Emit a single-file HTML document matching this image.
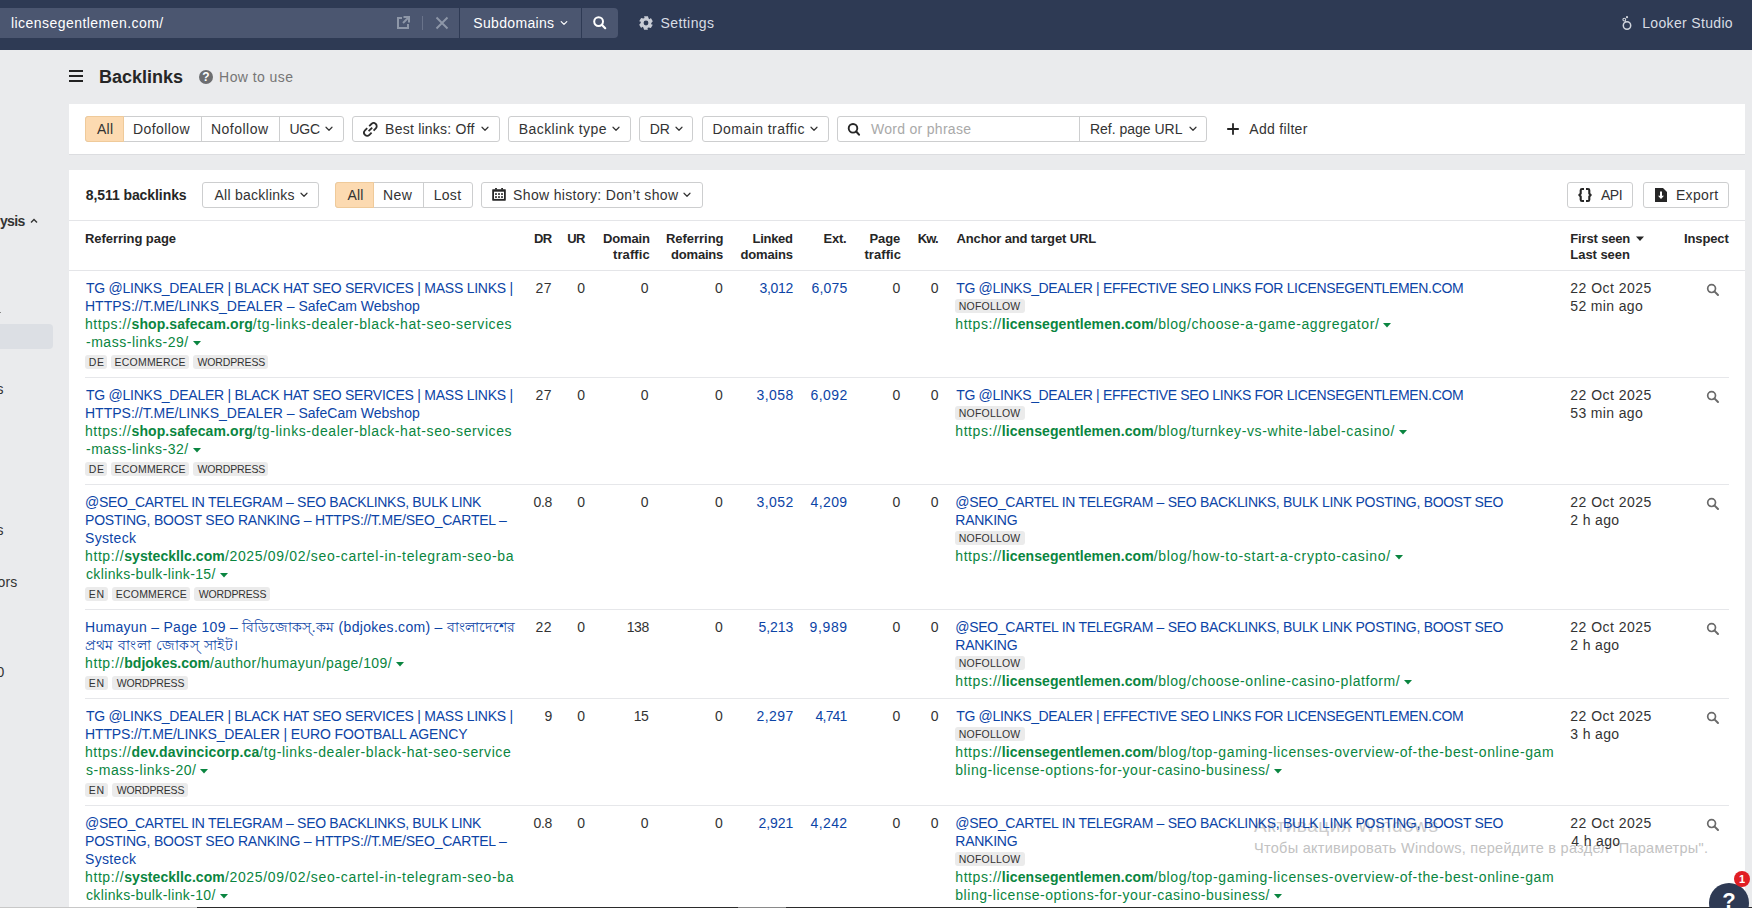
<!DOCTYPE html>
<html><head><meta charset="utf-8"><title>Backlinks</title>
<style>
html,body{margin:0;padding:0;}
body{width:1752px;height:908px;overflow:hidden;position:relative;background:#eaebed;font-family:"Liberation Sans", sans-serif;}
</style></head><body>
<div style="position:absolute;left:0px;top:0px;width:1752px;height:50px;background:#2e3a54;"></div><div style="position:absolute;left:0px;top:8px;width:459px;height:30px;background:#4b5670;"></div><div style="position:absolute;left:460px;top:8px;width:121px;height:30px;background:#4b5670;"></div><div style="position:absolute;left:582px;top:8px;width:36px;height:30px;background:#4b5670;border-radius:0 4px 4px 0"></div><div style="position:absolute;left:11.00px;top:14px;font-size:14px;line-height:18px;font-weight:400;color:#ffffff;letter-spacing:0.45px;white-space:nowrap;">licensegentlemen.com/</div><svg style="position:absolute;left:396px;top:15px;" width="16" height="16" viewBox="0 0 16 16"><path d="M6 3 H2 V13 H12 V9" fill="none" stroke="#8e97a8" stroke-width="2"/><path d="M7 8 L13 2" stroke="#8e97a8" stroke-width="2"/><path d="M7.5 2 H13 V7.5" fill="none" stroke="#8e97a8" stroke-width="2"/></svg><div style="position:absolute;left:422px;top:16px;width:1px;height:14px;background:#69738a;"></div><svg style="position:absolute;left:435px;top:16px;" width="14" height="14" viewBox="0 0 14 14"><path d="M1.5 1.5 L12.5 12.5 M12.5 1.5 L1.5 12.5" stroke="#8e97a8" stroke-width="1.9"/></svg><div style="position:absolute;left:473.25px;top:14px;font-size:14px;line-height:18px;font-weight:400;color:#ffffff;letter-spacing:0.333px;white-space:nowrap;">Subdomains</div><svg style="position:absolute;left:560px;top:19px;" width="8" height="8" viewBox="0 0 8 8"><path d="M1.2 2.6 L4 5.4 L6.8 2.6" fill="none" stroke="#ffffff" stroke-width="1.2" stroke-linecap="round" stroke-linejoin="round"/></svg><svg style="position:absolute;left:591.9px;top:15.2px;" width="16" height="16" viewBox="0 0 16 16"><circle cx="6.6" cy="6.6" r="4.4" fill="none" stroke="#ffffff" stroke-width="2"/><path d="M9.8 9.8 L13.2 13.2" stroke="#ffffff" stroke-width="2.2" stroke-linecap="round"/></svg><svg style="position:absolute;left:639px;top:16px;" width="14" height="14" viewBox="0 0 14 14"><path d="M5.07 0.27 L8.93 0.27 L9.65 2.41 L10.68 3.19 L11.86 1.96 L13.79 5.31 L12.30 7.00 L12.14 8.28 L13.79 8.69 L11.86 12.04 L9.65 11.59 L8.46 12.09 L8.93 13.73 L5.07 13.73 L4.35 11.59 L3.32 10.81 L2.14 12.04 L0.21 8.69 L1.70 7.00 L1.86 5.72 L0.21 5.31 L2.14 1.96 L4.35 2.41 L5.54 1.91 Z" fill="#c8ccd5"/><circle cx="7" cy="7" r="2.4" fill="#2e3a54"/></svg><div style="position:absolute;left:660.50px;top:14px;font-size:14px;line-height:18px;font-weight:400;color:#d9dde4;letter-spacing:0.429px;white-space:nowrap;">Settings</div><svg style="position:absolute;left:1620px;top:14px;" width="14" height="18" viewBox="0 0 14 18"><circle cx="7" cy="11.5" r="3.7" fill="none" stroke="#d0d4dc" stroke-width="1.5"/><circle cx="4.3" cy="5.6" r="1.4" fill="none" stroke="#d0d4dc" stroke-width="1.1"/><circle cx="7" cy="3.2" r="1.1" fill="#d0d4dc"/><path d="M5 7 L5.8 8.2" stroke="#d0d4dc" stroke-width="1"/></svg><div style="position:absolute;left:1642.25px;top:14px;font-size:14px;line-height:18px;font-weight:400;color:#d9dde4;letter-spacing:0.333px;white-space:nowrap;">Looker Studio</div><div style="position:absolute;left:0.00px;top:212px;font-size:14px;line-height:18px;font-weight:700;color:#333333;letter-spacing:-0.667px;white-space:nowrap;">ysis</div><svg style="position:absolute;left:29px;top:216px;" width="10" height="10" viewBox="0 0 10 10"><path d="M2 6.4 L5 3.4 L8 6.4" fill="none" stroke="#333" stroke-width="1.4"/></svg><div style="position:absolute;left:0px;top:312px;width:1px;height:1px;background:#888;"></div><div style="position:absolute;left:0px;top:324px;width:53px;height:25px;background:#dcdfe4;border-radius:0 4px 4px 0"></div><div style="position:absolute;left:-3.50px;top:380px;font-size:14px;line-height:18px;font-weight:400;color:#333333;letter-spacing:-2.24px;white-space:nowrap;">s</div><div style="position:absolute;left:-3.50px;top:521px;font-size:14px;line-height:18px;font-weight:400;color:#333333;letter-spacing:-2.24px;white-space:nowrap;">s</div><div style="position:absolute;left:-2.50px;top:573px;font-size:14px;line-height:18px;font-weight:400;color:#333333;letter-spacing:0.1px;white-space:nowrap;">ors</div><div style="position:absolute;left:-3.50px;top:663px;font-size:14px;line-height:18px;font-weight:400;color:#333333;letter-spacing:-2.28px;white-space:nowrap;">0</div><div style="position:absolute;left:69px;top:70px;width:14px;height:2px;background:#222;"></div><div style="position:absolute;left:69px;top:75px;width:14px;height:2px;background:#222;"></div><div style="position:absolute;left:69px;top:80px;width:14px;height:2px;background:#222;"></div><div style="position:absolute;left:98.90px;top:66px;font-size:18px;line-height:22px;font-weight:700;color:#262626;letter-spacing:0.0px;white-space:nowrap;">Backlinks</div><svg style="position:absolute;left:199px;top:70px;" width="14" height="14" viewBox="0 0 14 14"><circle cx="7" cy="7" r="7" fill="#6d6e71"/><text x="7" y="11" text-anchor="middle" font-family="Liberation Sans" font-weight="700" font-size="12" fill="#fff">?</text></svg><div style="position:absolute;left:219.10px;top:68px;font-size:14px;line-height:18px;font-weight:400;color:#767676;letter-spacing:0.422px;white-space:nowrap;">How to use</div><div style="position:absolute;left:69px;top:104px;width:1676px;height:50px;background:#fff;box-shadow:0 1px 0 #dcdde0"></div><div style="position:absolute;left:85px;top:116px;width:259px;height:26px;box-sizing:border-box;background:#fff;border:1px solid #cdcecf;border-radius:3px;"></div><div style="position:absolute;left:85px;top:116px;width:39px;height:26px;box-sizing:border-box;background:#fcdab1;border:1px solid #efca9a;border-radius:3px 0 0 3px;"></div><div style="position:absolute;left:201px;top:117px;width:1px;height:24px;background:#cdcecf;"></div><div style="position:absolute;left:279px;top:117px;width:1px;height:24px;background:#cdcecf;"></div><div style="position:absolute;left:97.10px;top:120px;font-size:14px;line-height:18px;font-weight:400;color:#333333;letter-spacing:0.18px;white-space:nowrap;">All</div><div style="position:absolute;left:133.00px;top:120px;font-size:14px;line-height:18px;font-weight:400;color:#333333;letter-spacing:0.429px;white-space:nowrap;">Dofollow</div><div style="position:absolute;left:211.00px;top:120px;font-size:14px;line-height:18px;font-weight:400;color:#333333;letter-spacing:0.486px;white-space:nowrap;">Nofollow</div><div style="position:absolute;left:289.40px;top:120px;font-size:14px;line-height:18px;font-weight:400;color:#333333;letter-spacing:-0.2px;white-space:nowrap;">UGC</div><svg style="position:absolute;left:325px;top:126px;" width="8" height="6" viewBox="0 0 8 6"><path d="M1 1.25 L4 4.25 L7 1.25" fill="none" stroke="#333333" stroke-width="1.2" stroke-linecap="round" stroke-linejoin="round"/></svg><div style="position:absolute;left:352px;top:116px;width:148px;height:26px;box-sizing:border-box;background:#fff;border:1px solid #cdcecf;border-radius:3px;"></div><svg style="position:absolute;left:362.7px;top:121.6px;" width="16" height="16" viewBox="0 0 16 16"><g fill="none" stroke="#2b2b2b" stroke-width="1.8" stroke-linecap="butt"><path d="M6.2 4.2 L8.4 2.0 A3.1 3.1 0 0 1 12.8 6.4 L10.6 8.6"/><path d="M8.6 10.6 L6.4 12.8 A3.1 3.1 0 0 1 2.0 8.4 L4.2 6.2"/><path d="M5.6 9.2 L9.2 5.6"/></g></svg><div style="position:absolute;left:385.10px;top:120px;font-size:14px;line-height:18px;font-weight:400;color:#333333;letter-spacing:0.228px;white-space:nowrap;">Best links: Off</div><svg style="position:absolute;left:481px;top:126px;" width="8" height="6" viewBox="0 0 8 6"><path d="M1 1.25 L4 4.25 L7 1.25" fill="none" stroke="#333333" stroke-width="1.2" stroke-linecap="round" stroke-linejoin="round"/></svg><div style="position:absolute;left:508px;top:116px;width:123px;height:26px;box-sizing:border-box;background:#fff;border:1px solid #cdcecf;border-radius:3px;"></div><div style="position:absolute;left:518.70px;top:120px;font-size:14px;line-height:18px;font-weight:400;color:#333333;letter-spacing:0.45px;white-space:nowrap;">Backlink type</div><svg style="position:absolute;left:612px;top:126px;" width="8" height="6" viewBox="0 0 8 6"><path d="M1 1.25 L4 4.25 L7 1.25" fill="none" stroke="#333333" stroke-width="1.2" stroke-linecap="round" stroke-linejoin="round"/></svg><div style="position:absolute;left:639px;top:116px;width:54px;height:26px;box-sizing:border-box;background:#fff;border:1px solid #cdcecf;border-radius:3px;"></div><div style="position:absolute;left:649.70px;top:120px;font-size:14px;line-height:18px;font-weight:400;color:#333333;letter-spacing:0.0px;white-space:nowrap;">DR</div><svg style="position:absolute;left:675px;top:126px;" width="8" height="6" viewBox="0 0 8 6"><path d="M1 1.25 L4 4.25 L7 1.25" fill="none" stroke="#333333" stroke-width="1.2" stroke-linecap="round" stroke-linejoin="round"/></svg><div style="position:absolute;left:702px;top:116px;width:127px;height:26px;box-sizing:border-box;background:#fff;border:1px solid #cdcecf;border-radius:3px;"></div><div style="position:absolute;left:712.50px;top:120px;font-size:14px;line-height:18px;font-weight:400;color:#333333;letter-spacing:0.446px;white-space:nowrap;">Domain traffic</div><svg style="position:absolute;left:809.5px;top:126px;" width="8" height="6" viewBox="0 0 8 6"><path d="M1 1.25 L4 4.25 L7 1.25" fill="none" stroke="#333333" stroke-width="1.2" stroke-linecap="round" stroke-linejoin="round"/></svg><div style="position:absolute;left:837px;top:116px;width:370px;height:26px;box-sizing:border-box;background:#fff;border:1px solid #cdcecf;border-radius:3px;"></div><div style="position:absolute;left:1079px;top:117px;width:1px;height:24px;background:#cdcecf;"></div><svg style="position:absolute;left:846.2px;top:121.8px;" width="16" height="16" viewBox="0 0 16 16"><circle cx="7" cy="6.3" r="4.3" fill="none" stroke="#262626" stroke-width="1.9"/><path d="M10.2 9.5 L13 12.6" stroke="#262626" stroke-width="2.1" stroke-linecap="round"/></svg><div style="position:absolute;left:870.90px;top:120px;font-size:14px;line-height:18px;font-weight:400;color:#a9a9a9;letter-spacing:0.302px;white-space:nowrap;">Word or phrase</div><div style="position:absolute;left:1089.90px;top:120px;font-size:14px;line-height:18px;font-weight:400;color:#333333;letter-spacing:0.0px;white-space:nowrap;">Ref. page URL</div><svg style="position:absolute;left:1188.5px;top:126px;" width="8" height="6" viewBox="0 0 8 6"><path d="M1 1.25 L4 4.25 L7 1.25" fill="none" stroke="#333333" stroke-width="1.2" stroke-linecap="round" stroke-linejoin="round"/></svg><svg style="position:absolute;left:1226px;top:122px;" width="14" height="14" viewBox="0 0 14 14"><path d="M7 1.2 V12.8 M1.2 7 H12.8" stroke="#222" stroke-width="1.8"/></svg><div style="position:absolute;left:1249.30px;top:120px;font-size:14px;line-height:18px;font-weight:400;color:#333333;letter-spacing:0.311px;white-space:nowrap;">Add filter</div><div style="position:absolute;left:69px;top:170px;width:1676px;height:738px;background:#fff;"></div><div style="position:absolute;left:1254.10px;top:814px;font-size:19px;line-height:24px;font-weight:400;color:#cdcdcd;letter-spacing:0.55px;white-space:nowrap;">Активация Windows</div><div style="position:absolute;left:1254.10px;top:839px;font-size:14.5px;line-height:18px;font-weight:400;color:#c2c2c2;letter-spacing:0.272px;white-space:nowrap;">Чтобы активировать Windows, перейдите в раздел "Параметры".</div><div style="position:absolute;left:85.70px;top:186px;font-size:14px;line-height:18px;font-weight:700;color:#262626;letter-spacing:-0.071px;white-space:nowrap;">8,511 backlinks</div><div style="position:absolute;left:202px;top:182px;width:117px;height:26px;box-sizing:border-box;background:#fff;border:1px solid #cdcecf;border-radius:3px;"></div><div style="position:absolute;left:214.50px;top:186px;font-size:14px;line-height:18px;font-weight:400;color:#333333;letter-spacing:0.25px;white-space:nowrap;">All backlinks</div><svg style="position:absolute;left:300px;top:192px;" width="8" height="6" viewBox="0 0 8 6"><path d="M1 1.25 L4 4.25 L7 1.25" fill="none" stroke="#333333" stroke-width="1.2" stroke-linecap="round" stroke-linejoin="round"/></svg><div style="position:absolute;left:335px;top:182px;width:138px;height:26px;box-sizing:border-box;background:#fff;border:1px solid #cdcecf;border-radius:3px;"></div><div style="position:absolute;left:335px;top:182px;width:39px;height:26px;box-sizing:border-box;background:#fcdab1;border:1px solid #efca9a;border-radius:3px 0 0 3px;"></div><div style="position:absolute;left:423px;top:183px;width:1px;height:24px;background:#cdcecf;"></div><div style="position:absolute;left:347.40px;top:186px;font-size:14px;line-height:18px;font-weight:400;color:#333333;letter-spacing:0.18px;white-space:nowrap;">All</div><div style="position:absolute;left:383.00px;top:186px;font-size:14px;line-height:18px;font-weight:400;color:#333333;letter-spacing:0.42px;white-space:nowrap;">New</div><div style="position:absolute;left:433.70px;top:186px;font-size:14px;line-height:18px;font-weight:400;color:#333333;letter-spacing:0.306px;white-space:nowrap;">Lost</div><div style="position:absolute;left:481px;top:182px;width:222px;height:26px;box-sizing:border-box;background:#fff;border:1px solid #cdcecf;border-radius:3px;"></div><svg style="position:absolute;left:491px;top:187px;" width="16" height="15" viewBox="0 0 16 15"><rect x="1.2" y="2.2" width="13.6" height="11.5" rx="0.6" fill="#262626"/><rect x="3" y="4.7" width="10" height="7.2" fill="#fff"/><g fill="#262626"><rect x="4.1" y="1" width="1.8" height="1.6"/><rect x="10.2" y="1" width="1.8" height="1.6"/><rect x="4.1" y="6.2" width="1.8" height="1.7"/><rect x="7.1" y="6.2" width="1.8" height="1.7"/><rect x="10.1" y="6.2" width="1.8" height="1.7"/><rect x="4.1" y="9.2" width="1.8" height="1.7"/><rect x="7.1" y="9.2" width="1.8" height="1.7"/><rect x="10.1" y="9.2" width="1.8" height="1.7"/></g></svg><div style="position:absolute;left:513.10px;top:186px;font-size:14px;line-height:18px;font-weight:400;color:#333333;letter-spacing:0.339px;white-space:nowrap;">Show history: Don’t show</div><svg style="position:absolute;left:683px;top:192px;" width="8" height="6" viewBox="0 0 8 6"><path d="M1 1.25 L4 4.25 L7 1.25" fill="none" stroke="#333333" stroke-width="1.2" stroke-linecap="round" stroke-linejoin="round"/></svg><div style="position:absolute;left:1567px;top:182px;width:66px;height:26px;box-sizing:border-box;background:#fff;border:1px solid #cdcecf;border-radius:3px;"></div><svg style="position:absolute;left:1577px;top:187px;" width="16" height="16" viewBox="0 0 16 16"><g fill="none" stroke="#262626" stroke-width="2.1" stroke-linejoin="round"><path d="M7 2 H5 Q3.7 2 3.7 3.3 V6.5 L2.3 8 L3.7 9.5 V12.7 Q3.7 14 5 14 H7"/><path d="M9 2 H11 Q12.3 2 12.3 3.3 V6.5 L13.7 8 L12.3 9.5 V12.7 Q12.3 14 11 14 H9"/></g></svg><div style="position:absolute;left:1601.00px;top:186px;font-size:14px;line-height:18px;font-weight:400;color:#333333;letter-spacing:-0.5px;white-space:nowrap;">API</div><div style="position:absolute;left:1643px;top:182px;width:86px;height:26px;box-sizing:border-box;background:#fff;border:1px solid #cdcecf;border-radius:3px;"></div><svg style="position:absolute;left:1655px;top:188px;" width="12" height="14" viewBox="0 0 12 14"><path d="M0 0 H8 L12 4 V14 H0 Z" fill="#262626"/><path d="M6 3.5 V8.5" stroke="#fff" stroke-width="2"/><path d="M3 7.8 L6 11 L9 7.8 Z" fill="#fff"/></svg><div style="position:absolute;left:1675.90px;top:186px;font-size:14px;line-height:18px;font-weight:400;color:#333333;letter-spacing:0.36px;white-space:nowrap;">Export</div><div style="position:absolute;left:69px;top:220px;width:1676px;height:1px;background:#e4e5e8;"></div><div style="position:absolute;left:85.00px;top:231px;font-size:13px;line-height:16px;font-weight:700;color:#262626;letter-spacing:-0.053px;white-space:nowrap;">Referring page</div><div style="position:absolute;left:534.00px;top:231px;font-size:13px;line-height:16px;font-weight:700;color:#262626;letter-spacing:-0.68px;white-space:nowrap;">DR</div><div style="position:absolute;left:567.30px;top:231px;font-size:13px;line-height:16px;font-weight:700;color:#262626;letter-spacing:-0.68px;white-space:nowrap;">UR</div><div style="position:absolute;left:603.00px;top:231px;font-size:13px;line-height:16px;font-weight:700;color:#262626;letter-spacing:-0.168px;white-space:nowrap;">Domain</div><div style="position:absolute;left:613.00px;top:247px;font-size:13px;line-height:16px;font-weight:700;color:#262626;letter-spacing:0.086px;white-space:nowrap;">traffic</div><div style="position:absolute;left:666.00px;top:231px;font-size:13px;line-height:16px;font-weight:700;color:#262626;letter-spacing:-0.036px;white-space:nowrap;">Referring</div><div style="position:absolute;left:671.00px;top:247px;font-size:13px;line-height:16px;font-weight:700;color:#262626;letter-spacing:-0.187px;white-space:nowrap;">domains</div><div style="position:absolute;left:752.60px;top:231px;font-size:13px;line-height:16px;font-weight:700;color:#262626;letter-spacing:-0.32px;white-space:nowrap;">Linked</div><div style="position:absolute;left:740.60px;top:247px;font-size:13px;line-height:16px;font-weight:700;color:#262626;letter-spacing:-0.187px;white-space:nowrap;">domains</div><div style="position:absolute;left:823.60px;top:231px;font-size:13px;line-height:16px;font-weight:700;color:#262626;letter-spacing:-0.294px;white-space:nowrap;">Ext.</div><div style="position:absolute;left:869.40px;top:231px;font-size:13px;line-height:16px;font-weight:700;color:#262626;letter-spacing:-0.067px;white-space:nowrap;">Page</div><div style="position:absolute;left:864.40px;top:247px;font-size:13px;line-height:16px;font-weight:700;color:#262626;letter-spacing:0.086px;white-space:nowrap;">traffic</div><div style="position:absolute;left:917.80px;top:231px;font-size:13px;line-height:16px;font-weight:700;color:#262626;letter-spacing:-0.9px;white-space:nowrap;">Kw.</div><div style="position:absolute;left:956.50px;top:231px;font-size:13px;line-height:16px;font-weight:700;color:#262626;letter-spacing:-0.134px;white-space:nowrap;">Anchor and target URL</div><div style="position:absolute;left:1570.30px;top:231px;font-size:13px;line-height:16px;font-weight:700;color:#262626;letter-spacing:-0.155px;white-space:nowrap;">First seen</div><svg style="position:absolute;left:1635px;top:236px;" width="10" height="6" viewBox="0 0 10 6"><path d="M1 0.5 H9 L5 5 Z" fill="#262626"/></svg><div style="position:absolute;left:1570.30px;top:247px;font-size:13px;line-height:16px;font-weight:700;color:#262626;letter-spacing:-0.044px;white-space:nowrap;">Last seen</div><div style="position:absolute;left:1684.00px;top:231px;font-size:13px;line-height:16px;font-weight:700;color:#262626;letter-spacing:-0.133px;white-space:nowrap;">Inspect</div><div style="position:absolute;left:69px;top:270px;width:1676px;height:1px;background:#e4e5e8;"></div><div style="position:absolute;left:86.00px;top:279px;font-size:14px;line-height:18px;font-weight:400;color:#0c44a6;letter-spacing:-0.244px;white-space:nowrap;">TG @LINKS_DEALER | BLACK HAT SEO SERVICES | MASS LINKS |</div><div style="position:absolute;left:85.00px;top:297px;font-size:14px;line-height:18px;font-weight:400;color:#0c44a6;letter-spacing:0.01px;white-space:nowrap;">HTTPS://T.ME/LINKS_DEALER – SafeCam Webshop</div><div style="position:absolute;left:85.00px;top:315px;font-size:14px;line-height:18px;font-weight:400;color:#0a8540;white-space:nowrap;"><span style="letter-spacing:0.562px">https://</span><span style="font-weight:700;letter-spacing:0.094px">shop.safecam.org</span><span style="letter-spacing:0.583px">/tg-links-dealer-black-hat-seo-services</span></div><div style="position:absolute;left:86.00px;top:333px;font-size:14px;line-height:18px;font-weight:400;color:#0a8540;letter-spacing:0.523px;white-space:nowrap;">-mass-links-29/<svg style="display:inline-block;vertical-align:1px;margin-left:4px" width="8" height="5" viewBox="0 0 8 5"><path d="M0 0 H8 L4 4.6 Z" fill="#0a8540"/></svg></div><div style="position:absolute;left:85.3px;top:355px;width:21.6px;height:14px;background:#ebebeb;border-radius:3px"></div><div style="position:absolute;left:88.80px;top:355px;font-size:10.5px;line-height:14px;font-weight:400;color:#333333;letter-spacing:0.6px;white-space:nowrap;">DE</div><div style="position:absolute;left:111.1px;top:355px;width:77.8px;height:14px;background:#ebebeb;border-radius:3px"></div><div style="position:absolute;left:114.60px;top:355px;font-size:10.5px;line-height:14px;font-weight:400;color:#333333;letter-spacing:0.199px;white-space:nowrap;">ECOMMERCE</div><div style="position:absolute;left:193.1px;top:355px;width:75.4px;height:14px;background:#ebebeb;border-radius:3px"></div><div style="position:absolute;left:197.60px;top:355px;font-size:10.5px;line-height:14px;font-weight:400;color:#333333;letter-spacing:-0.15px;white-space:nowrap;">WORDPRESS</div><div style="position:absolute;left:85px;top:377px;width:1644px;height:1px;background:#e6e7ea;"></div><div style="position:absolute;left:535.50px;top:279px;font-size:14px;line-height:18px;font-weight:400;color:#333333;letter-spacing:0.4px;white-space:nowrap;">27</div><div style="position:absolute;left:577.30px;top:279px;font-size:14px;line-height:18px;font-weight:400;color:#333333;letter-spacing:-2.28px;white-space:nowrap;">0</div><div style="position:absolute;left:640.70px;top:279px;font-size:14px;line-height:18px;font-weight:400;color:#333333;letter-spacing:-2.28px;white-space:nowrap;">0</div><div style="position:absolute;left:715.00px;top:279px;font-size:14px;line-height:18px;font-weight:400;color:#333333;letter-spacing:-2.28px;white-space:nowrap;">0</div><div style="position:absolute;left:759.60px;top:279px;font-size:14px;line-height:18px;font-weight:400;color:#0c44a6;letter-spacing:-0.33px;white-space:nowrap;">3,012</div><div style="position:absolute;left:811.60px;top:279px;font-size:14px;line-height:18px;font-weight:400;color:#0c44a6;letter-spacing:0.15px;white-space:nowrap;">6,075</div><div style="position:absolute;left:892.60px;top:279px;font-size:14px;line-height:18px;font-weight:400;color:#333333;letter-spacing:-2.28px;white-space:nowrap;">0</div><div style="position:absolute;left:930.80px;top:279px;font-size:14px;line-height:18px;font-weight:400;color:#333333;letter-spacing:-2.28px;white-space:nowrap;">0</div><div style="position:absolute;left:956.30px;top:279px;font-size:14px;line-height:18px;font-weight:400;color:#0c44a6;letter-spacing:-0.349px;white-space:nowrap;">TG @LINKS_DEALER | EFFECTIVE SEO LINKS FOR LICENSEGENTLEMEN.COM</div><div style="position:absolute;left:955px;top:299px;width:69.8px;height:14px;background:#ebebeb;border-radius:3px"></div><div style="position:absolute;left:958.80px;top:299px;font-size:10.5px;line-height:14px;font-weight:400;color:#333333;letter-spacing:0.2px;white-space:nowrap;">NOFOLLOW</div><div style="position:absolute;left:955.30px;top:315px;font-size:14px;line-height:18px;font-weight:400;color:#0a8540;white-space:nowrap;"><span style="letter-spacing:0.562px">https://</span><span style="font-weight:700;letter-spacing:0.084px">licensegentlemen.com</span><span style="letter-spacing:0.578px">/blog/choose-a-game-aggregator/<svg style="display:inline-block;vertical-align:1px;margin-left:4px" width="8" height="5" viewBox="0 0 8 5"><path d="M0 0 H8 L4 4.6 Z" fill="#0a8540"/></svg></span></div><div style="position:absolute;left:1570.30px;top:279px;font-size:14px;line-height:18px;font-weight:400;color:#333333;letter-spacing:0.476px;white-space:nowrap;">22 Oct 2025</div><div style="position:absolute;left:1570.30px;top:297px;font-size:14px;line-height:18px;font-weight:400;color:#333333;letter-spacing:0.346px;white-space:nowrap;">52 min ago</div><svg style="position:absolute;left:1706px;top:283.3px;" width="14" height="14" viewBox="0 0 14 14"><circle cx="5.6" cy="5.6" r="3.9" fill="none" stroke="#6a6a6a" stroke-width="1.7"/><path d="M8.4 8.4 L12 12" stroke="#6a6a6a" stroke-width="2" stroke-linecap="round"/></svg><div style="position:absolute;left:86.00px;top:386px;font-size:14px;line-height:18px;font-weight:400;color:#0c44a6;letter-spacing:-0.244px;white-space:nowrap;">TG @LINKS_DEALER | BLACK HAT SEO SERVICES | MASS LINKS |</div><div style="position:absolute;left:85.00px;top:404px;font-size:14px;line-height:18px;font-weight:400;color:#0c44a6;letter-spacing:0.01px;white-space:nowrap;">HTTPS://T.ME/LINKS_DEALER – SafeCam Webshop</div><div style="position:absolute;left:85.00px;top:422px;font-size:14px;line-height:18px;font-weight:400;color:#0a8540;white-space:nowrap;"><span style="letter-spacing:0.562px">https://</span><span style="font-weight:700;letter-spacing:0.094px">shop.safecam.org</span><span style="letter-spacing:0.583px">/tg-links-dealer-black-hat-seo-services</span></div><div style="position:absolute;left:86.00px;top:440px;font-size:14px;line-height:18px;font-weight:400;color:#0a8540;letter-spacing:0.523px;white-space:nowrap;">-mass-links-32/<svg style="display:inline-block;vertical-align:1px;margin-left:4px" width="8" height="5" viewBox="0 0 8 5"><path d="M0 0 H8 L4 4.6 Z" fill="#0a8540"/></svg></div><div style="position:absolute;left:85.3px;top:462px;width:21.6px;height:14px;background:#ebebeb;border-radius:3px"></div><div style="position:absolute;left:88.80px;top:462px;font-size:10.5px;line-height:14px;font-weight:400;color:#333333;letter-spacing:0.6px;white-space:nowrap;">DE</div><div style="position:absolute;left:111.1px;top:462px;width:77.8px;height:14px;background:#ebebeb;border-radius:3px"></div><div style="position:absolute;left:114.60px;top:462px;font-size:10.5px;line-height:14px;font-weight:400;color:#333333;letter-spacing:0.199px;white-space:nowrap;">ECOMMERCE</div><div style="position:absolute;left:193.1px;top:462px;width:75.4px;height:14px;background:#ebebeb;border-radius:3px"></div><div style="position:absolute;left:197.60px;top:462px;font-size:10.5px;line-height:14px;font-weight:400;color:#333333;letter-spacing:-0.15px;white-space:nowrap;">WORDPRESS</div><div style="position:absolute;left:85px;top:484px;width:1644px;height:1px;background:#e6e7ea;"></div><div style="position:absolute;left:535.50px;top:386px;font-size:14px;line-height:18px;font-weight:400;color:#333333;letter-spacing:0.4px;white-space:nowrap;">27</div><div style="position:absolute;left:577.30px;top:386px;font-size:14px;line-height:18px;font-weight:400;color:#333333;letter-spacing:-2.28px;white-space:nowrap;">0</div><div style="position:absolute;left:640.70px;top:386px;font-size:14px;line-height:18px;font-weight:400;color:#333333;letter-spacing:-2.28px;white-space:nowrap;">0</div><div style="position:absolute;left:715.00px;top:386px;font-size:14px;line-height:18px;font-weight:400;color:#333333;letter-spacing:-2.28px;white-space:nowrap;">0</div><div style="position:absolute;left:756.60px;top:386px;font-size:14px;line-height:18px;font-weight:400;color:#0c44a6;letter-spacing:0.39px;white-space:nowrap;">3,058</div><div style="position:absolute;left:810.60px;top:386px;font-size:14px;line-height:18px;font-weight:400;color:#0c44a6;letter-spacing:0.39px;white-space:nowrap;">6,092</div><div style="position:absolute;left:892.60px;top:386px;font-size:14px;line-height:18px;font-weight:400;color:#333333;letter-spacing:-2.28px;white-space:nowrap;">0</div><div style="position:absolute;left:930.80px;top:386px;font-size:14px;line-height:18px;font-weight:400;color:#333333;letter-spacing:-2.28px;white-space:nowrap;">0</div><div style="position:absolute;left:956.30px;top:386px;font-size:14px;line-height:18px;font-weight:400;color:#0c44a6;letter-spacing:-0.349px;white-space:nowrap;">TG @LINKS_DEALER | EFFECTIVE SEO LINKS FOR LICENSEGENTLEMEN.COM</div><div style="position:absolute;left:955px;top:406px;width:69.8px;height:14px;background:#ebebeb;border-radius:3px"></div><div style="position:absolute;left:958.80px;top:406px;font-size:10.5px;line-height:14px;font-weight:400;color:#333333;letter-spacing:0.2px;white-space:nowrap;">NOFOLLOW</div><div style="position:absolute;left:955.30px;top:422px;font-size:14px;line-height:18px;font-weight:400;color:#0a8540;white-space:nowrap;"><span style="letter-spacing:0.562px">https://</span><span style="font-weight:700;letter-spacing:0.084px">licensegentlemen.com</span><span style="letter-spacing:0.606px">/blog/turnkey-vs-white-label-casino/<svg style="display:inline-block;vertical-align:1px;margin-left:4px" width="8" height="5" viewBox="0 0 8 5"><path d="M0 0 H8 L4 4.6 Z" fill="#0a8540"/></svg></span></div><div style="position:absolute;left:1570.30px;top:386px;font-size:14px;line-height:18px;font-weight:400;color:#333333;letter-spacing:0.476px;white-space:nowrap;">22 Oct 2025</div><div style="position:absolute;left:1570.30px;top:404px;font-size:14px;line-height:18px;font-weight:400;color:#333333;letter-spacing:0.346px;white-space:nowrap;">53 min ago</div><svg style="position:absolute;left:1706px;top:390.3px;" width="14" height="14" viewBox="0 0 14 14"><circle cx="5.6" cy="5.6" r="3.9" fill="none" stroke="#6a6a6a" stroke-width="1.7"/><path d="M8.4 8.4 L12 12" stroke="#6a6a6a" stroke-width="2" stroke-linecap="round"/></svg><div style="position:absolute;left:85.00px;top:493px;font-size:14px;line-height:18px;font-weight:400;color:#0c44a6;letter-spacing:-0.308px;white-space:nowrap;">@SEO_CARTEL IN TELEGRAM – SEO BACKLINKS, BULK LINK</div><div style="position:absolute;left:85.00px;top:511px;font-size:14px;line-height:18px;font-weight:400;color:#0c44a6;letter-spacing:-0.211px;white-space:nowrap;">POSTING, BOOST SEO RANKING – HTTPS://T.ME/SEO_CARTEL –</div><div style="position:absolute;left:85.00px;top:529px;font-size:14px;line-height:18px;font-weight:400;color:#0c44a6;letter-spacing:0.327px;white-space:nowrap;">Systeck</div><div style="position:absolute;left:85.00px;top:547px;font-size:14px;line-height:18px;font-weight:400;color:#0a8540;white-space:nowrap;"><span style="letter-spacing:0.601px">http://</span><span style="font-weight:700;letter-spacing:0.072px">systeckllc.com</span><span style="letter-spacing:0.679px">/2025/09/02/seo-cartel-in-telegram-seo-ba</span></div><div style="position:absolute;left:86.00px;top:565px;font-size:14px;line-height:18px;font-weight:400;color:#0a8540;letter-spacing:0.36px;white-space:nowrap;">cklinks-bulk-link-15/<svg style="display:inline-block;vertical-align:1px;margin-left:4px" width="8" height="5" viewBox="0 0 8 5"><path d="M0 0 H8 L4 4.6 Z" fill="#0a8540"/></svg></div><div style="position:absolute;left:85.3px;top:587px;width:22.8px;height:14px;background:#ebebeb;border-radius:3px"></div><div style="position:absolute;left:88.80px;top:587px;font-size:10.5px;line-height:14px;font-weight:400;color:#333333;letter-spacing:0.8px;white-space:nowrap;">EN</div><div style="position:absolute;left:112.3px;top:587px;width:77.8px;height:14px;background:#ebebeb;border-radius:3px"></div><div style="position:absolute;left:115.80px;top:587px;font-size:10.5px;line-height:14px;font-weight:400;color:#333333;letter-spacing:0.199px;white-space:nowrap;">ECOMMERCE</div><div style="position:absolute;left:194.3px;top:587px;width:75.4px;height:14px;background:#ebebeb;border-radius:3px"></div><div style="position:absolute;left:198.80px;top:587px;font-size:10.5px;line-height:14px;font-weight:400;color:#333333;letter-spacing:-0.15px;white-space:nowrap;">WORDPRESS</div><div style="position:absolute;left:85px;top:609px;width:1644px;height:1px;background:#e6e7ea;"></div><div style="position:absolute;left:533.50px;top:493px;font-size:14px;line-height:18px;font-weight:400;color:#333333;letter-spacing:-0.38px;white-space:nowrap;">0.8</div><div style="position:absolute;left:577.30px;top:493px;font-size:14px;line-height:18px;font-weight:400;color:#333333;letter-spacing:-2.28px;white-space:nowrap;">0</div><div style="position:absolute;left:640.70px;top:493px;font-size:14px;line-height:18px;font-weight:400;color:#333333;letter-spacing:-2.28px;white-space:nowrap;">0</div><div style="position:absolute;left:715.00px;top:493px;font-size:14px;line-height:18px;font-weight:400;color:#333333;letter-spacing:-2.28px;white-space:nowrap;">0</div><div style="position:absolute;left:756.60px;top:493px;font-size:14px;line-height:18px;font-weight:400;color:#0c44a6;letter-spacing:0.39px;white-space:nowrap;">3,052</div><div style="position:absolute;left:810.60px;top:493px;font-size:14px;line-height:18px;font-weight:400;color:#0c44a6;letter-spacing:0.38px;white-space:nowrap;">4,209</div><div style="position:absolute;left:892.60px;top:493px;font-size:14px;line-height:18px;font-weight:400;color:#333333;letter-spacing:-2.28px;white-space:nowrap;">0</div><div style="position:absolute;left:930.80px;top:493px;font-size:14px;line-height:18px;font-weight:400;color:#333333;letter-spacing:-2.28px;white-space:nowrap;">0</div><div style="position:absolute;left:955.30px;top:493px;font-size:14px;line-height:18px;font-weight:400;color:#0c44a6;letter-spacing:-0.298px;white-space:nowrap;">@SEO_CARTEL IN TELEGRAM – SEO BACKLINKS, BULK LINK POSTING, BOOST SEO</div><div style="position:absolute;left:955.30px;top:511px;font-size:14px;line-height:18px;font-weight:400;color:#0c44a6;letter-spacing:-0.247px;white-space:nowrap;">RANKING</div><div style="position:absolute;left:955px;top:531px;width:69.8px;height:14px;background:#ebebeb;border-radius:3px"></div><div style="position:absolute;left:958.80px;top:531px;font-size:10.5px;line-height:14px;font-weight:400;color:#333333;letter-spacing:0.2px;white-space:nowrap;">NOFOLLOW</div><div style="position:absolute;left:955.30px;top:547px;font-size:14px;line-height:18px;font-weight:400;color:#0a8540;white-space:nowrap;"><span style="letter-spacing:0.562px">https://</span><span style="font-weight:700;letter-spacing:0.084px">licensegentlemen.com</span><span style="letter-spacing:0.709px">/blog/how-to-start-a-crypto-casino/<svg style="display:inline-block;vertical-align:1px;margin-left:4px" width="8" height="5" viewBox="0 0 8 5"><path d="M0 0 H8 L4 4.6 Z" fill="#0a8540"/></svg></span></div><div style="position:absolute;left:1570.30px;top:493px;font-size:14px;line-height:18px;font-weight:400;color:#333333;letter-spacing:0.476px;white-space:nowrap;">22 Oct 2025</div><div style="position:absolute;left:1570.30px;top:511px;font-size:14px;line-height:18px;font-weight:400;color:#333333;letter-spacing:0.347px;white-space:nowrap;">2 h ago</div><svg style="position:absolute;left:1706px;top:497.3px;" width="14" height="14" viewBox="0 0 14 14"><circle cx="5.6" cy="5.6" r="3.9" fill="none" stroke="#6a6a6a" stroke-width="1.7"/><path d="M8.4 8.4 L12 12" stroke="#6a6a6a" stroke-width="2" stroke-linecap="round"/></svg><div style="position:absolute;left:85.00px;top:618px;font-size:14px;line-height:18px;font-weight:400;color:#0c44a6;letter-spacing:0.295px;white-space:nowrap;">Humayun – Page 109 – বিডিজোকস্.কম (bdjokes.com) – বাংলাদেশের</div><div style="position:absolute;left:85.00px;top:636px;font-size:14px;line-height:18px;font-weight:400;color:#0c44a6;letter-spacing:0.545px;white-space:nowrap;">প্রথম বাংলা জোকস্ সাইট।</div><div style="position:absolute;left:85.00px;top:654px;font-size:14px;line-height:18px;font-weight:400;color:#0a8540;white-space:nowrap;"><span style="letter-spacing:0.601px">http://</span><span style="font-weight:700;letter-spacing:0.021px">bdjokes.com</span><span style="letter-spacing:0.434px">/author/humayun/page/109/<svg style="display:inline-block;vertical-align:1px;margin-left:4px" width="8" height="5" viewBox="0 0 8 5"><path d="M0 0 H8 L4 4.6 Z" fill="#0a8540"/></svg></span></div><div style="position:absolute;left:85.3px;top:676px;width:22.8px;height:14px;background:#ebebeb;border-radius:3px"></div><div style="position:absolute;left:88.80px;top:676px;font-size:10.5px;line-height:14px;font-weight:400;color:#333333;letter-spacing:0.8px;white-space:nowrap;">EN</div><div style="position:absolute;left:112.3px;top:676px;width:75.4px;height:14px;background:#ebebeb;border-radius:3px"></div><div style="position:absolute;left:116.80px;top:676px;font-size:10.5px;line-height:14px;font-weight:400;color:#333333;letter-spacing:-0.15px;white-space:nowrap;">WORDPRESS</div><div style="position:absolute;left:85px;top:698px;width:1644px;height:1px;background:#e6e7ea;"></div><div style="position:absolute;left:535.50px;top:618px;font-size:14px;line-height:18px;font-weight:400;color:#333333;letter-spacing:0.4px;white-space:nowrap;">22</div><div style="position:absolute;left:577.30px;top:618px;font-size:14px;line-height:18px;font-weight:400;color:#333333;letter-spacing:-2.28px;white-space:nowrap;">0</div><div style="position:absolute;left:626.70px;top:618px;font-size:14px;line-height:18px;font-weight:400;color:#333333;letter-spacing:-0.44px;white-space:nowrap;">138</div><div style="position:absolute;left:715.00px;top:618px;font-size:14px;line-height:18px;font-weight:400;color:#333333;letter-spacing:-2.28px;white-space:nowrap;">0</div><div style="position:absolute;left:758.60px;top:618px;font-size:14px;line-height:18px;font-weight:400;color:#0c44a6;letter-spacing:-0.09px;white-space:nowrap;">5,213</div><div style="position:absolute;left:809.60px;top:618px;font-size:14px;line-height:18px;font-weight:400;color:#0c44a6;letter-spacing:0.63px;white-space:nowrap;">9,989</div><div style="position:absolute;left:892.60px;top:618px;font-size:14px;line-height:18px;font-weight:400;color:#333333;letter-spacing:-2.28px;white-space:nowrap;">0</div><div style="position:absolute;left:930.80px;top:618px;font-size:14px;line-height:18px;font-weight:400;color:#333333;letter-spacing:-2.28px;white-space:nowrap;">0</div><div style="position:absolute;left:955.30px;top:618px;font-size:14px;line-height:18px;font-weight:400;color:#0c44a6;letter-spacing:-0.298px;white-space:nowrap;">@SEO_CARTEL IN TELEGRAM – SEO BACKLINKS, BULK LINK POSTING, BOOST SEO</div><div style="position:absolute;left:955.30px;top:636px;font-size:14px;line-height:18px;font-weight:400;color:#0c44a6;letter-spacing:-0.247px;white-space:nowrap;">RANKING</div><div style="position:absolute;left:955px;top:656px;width:69.8px;height:14px;background:#ebebeb;border-radius:3px"></div><div style="position:absolute;left:958.80px;top:656px;font-size:10.5px;line-height:14px;font-weight:400;color:#333333;letter-spacing:0.2px;white-space:nowrap;">NOFOLLOW</div><div style="position:absolute;left:955.30px;top:672px;font-size:14px;line-height:18px;font-weight:400;color:#0a8540;white-space:nowrap;"><span style="letter-spacing:0.562px">https://</span><span style="font-weight:700;letter-spacing:0.084px">licensegentlemen.com</span><span style="letter-spacing:0.582px">/blog/choose-online-casino-platform/<svg style="display:inline-block;vertical-align:1px;margin-left:4px" width="8" height="5" viewBox="0 0 8 5"><path d="M0 0 H8 L4 4.6 Z" fill="#0a8540"/></svg></span></div><div style="position:absolute;left:1570.30px;top:618px;font-size:14px;line-height:18px;font-weight:400;color:#333333;letter-spacing:0.476px;white-space:nowrap;">22 Oct 2025</div><div style="position:absolute;left:1570.30px;top:636px;font-size:14px;line-height:18px;font-weight:400;color:#333333;letter-spacing:0.347px;white-space:nowrap;">2 h ago</div><svg style="position:absolute;left:1706px;top:622.3px;" width="14" height="14" viewBox="0 0 14 14"><circle cx="5.6" cy="5.6" r="3.9" fill="none" stroke="#6a6a6a" stroke-width="1.7"/><path d="M8.4 8.4 L12 12" stroke="#6a6a6a" stroke-width="2" stroke-linecap="round"/></svg><div style="position:absolute;left:86.00px;top:707px;font-size:14px;line-height:18px;font-weight:400;color:#0c44a6;letter-spacing:-0.244px;white-space:nowrap;">TG @LINKS_DEALER | BLACK HAT SEO SERVICES | MASS LINKS |</div><div style="position:absolute;left:85.00px;top:725px;font-size:14px;line-height:18px;font-weight:400;color:#0c44a6;letter-spacing:-0.118px;white-space:nowrap;">HTTPS://T.ME/LINKS_DEALER | EURO FOOTBALL AGENCY</div><div style="position:absolute;left:85.00px;top:743px;font-size:14px;line-height:18px;font-weight:400;color:#0a8540;white-space:nowrap;"><span style="letter-spacing:0.562px">https://</span><span style="font-weight:700;letter-spacing:0.154px">dev.davincicorp.ca</span><span style="letter-spacing:0.591px">/tg-links-dealer-black-hat-seo-service</span></div><div style="position:absolute;left:86.00px;top:761px;font-size:14px;line-height:18px;font-weight:400;color:#0a8540;letter-spacing:0.534px;white-space:nowrap;">s-mass-links-20/<svg style="display:inline-block;vertical-align:1px;margin-left:4px" width="8" height="5" viewBox="0 0 8 5"><path d="M0 0 H8 L4 4.6 Z" fill="#0a8540"/></svg></div><div style="position:absolute;left:85.3px;top:783px;width:22.8px;height:14px;background:#ebebeb;border-radius:3px"></div><div style="position:absolute;left:88.80px;top:783px;font-size:10.5px;line-height:14px;font-weight:400;color:#333333;letter-spacing:0.8px;white-space:nowrap;">EN</div><div style="position:absolute;left:112.3px;top:783px;width:75.4px;height:14px;background:#ebebeb;border-radius:3px"></div><div style="position:absolute;left:116.80px;top:783px;font-size:10.5px;line-height:14px;font-weight:400;color:#333333;letter-spacing:-0.15px;white-space:nowrap;">WORDPRESS</div><div style="position:absolute;left:85px;top:805px;width:1644px;height:1px;background:#e6e7ea;"></div><div style="position:absolute;left:544.50px;top:707px;font-size:14px;line-height:18px;font-weight:400;color:#333333;letter-spacing:1.72px;white-space:nowrap;">9</div><div style="position:absolute;left:577.30px;top:707px;font-size:14px;line-height:18px;font-weight:400;color:#333333;letter-spacing:-2.28px;white-space:nowrap;">0</div><div style="position:absolute;left:633.70px;top:707px;font-size:14px;line-height:18px;font-weight:400;color:#333333;letter-spacing:-0.56px;white-space:nowrap;">15</div><div style="position:absolute;left:715.00px;top:707px;font-size:14px;line-height:18px;font-weight:400;color:#333333;letter-spacing:-2.28px;white-space:nowrap;">0</div><div style="position:absolute;left:756.60px;top:707px;font-size:14px;line-height:18px;font-weight:400;color:#0c44a6;letter-spacing:0.39px;white-space:nowrap;">2,297</div><div style="position:absolute;left:815.60px;top:707px;font-size:14px;line-height:18px;font-weight:400;color:#0c44a6;letter-spacing:-0.82px;white-space:nowrap;">4,741</div><div style="position:absolute;left:892.60px;top:707px;font-size:14px;line-height:18px;font-weight:400;color:#333333;letter-spacing:-2.28px;white-space:nowrap;">0</div><div style="position:absolute;left:930.80px;top:707px;font-size:14px;line-height:18px;font-weight:400;color:#333333;letter-spacing:-2.28px;white-space:nowrap;">0</div><div style="position:absolute;left:956.30px;top:707px;font-size:14px;line-height:18px;font-weight:400;color:#0c44a6;letter-spacing:-0.349px;white-space:nowrap;">TG @LINKS_DEALER | EFFECTIVE SEO LINKS FOR LICENSEGENTLEMEN.COM</div><div style="position:absolute;left:955px;top:727px;width:69.8px;height:14px;background:#ebebeb;border-radius:3px"></div><div style="position:absolute;left:958.80px;top:727px;font-size:10.5px;line-height:14px;font-weight:400;color:#333333;letter-spacing:0.2px;white-space:nowrap;">NOFOLLOW</div><div style="position:absolute;left:955.30px;top:743px;font-size:14px;line-height:18px;font-weight:400;color:#0a8540;white-space:nowrap;"><span style="letter-spacing:0.562px">https://</span><span style="font-weight:700;letter-spacing:0.084px">licensegentlemen.com</span><span style="letter-spacing:0.626px">/blog/top-gaming-licenses-overview-of-the-best-online-gam</span></div><div style="position:absolute;left:955.30px;top:761px;font-size:14px;line-height:18px;font-weight:400;color:#0a8540;letter-spacing:0.537px;white-space:nowrap;">bling-license-options-for-your-casino-business/<svg style="display:inline-block;vertical-align:1px;margin-left:4px" width="8" height="5" viewBox="0 0 8 5"><path d="M0 0 H8 L4 4.6 Z" fill="#0a8540"/></svg></div><div style="position:absolute;left:1570.30px;top:707px;font-size:14px;line-height:18px;font-weight:400;color:#333333;letter-spacing:0.476px;white-space:nowrap;">22 Oct 2025</div><div style="position:absolute;left:1570.30px;top:725px;font-size:14px;line-height:18px;font-weight:400;color:#333333;letter-spacing:0.347px;white-space:nowrap;">3 h ago</div><svg style="position:absolute;left:1706px;top:711.3px;" width="14" height="14" viewBox="0 0 14 14"><circle cx="5.6" cy="5.6" r="3.9" fill="none" stroke="#6a6a6a" stroke-width="1.7"/><path d="M8.4 8.4 L12 12" stroke="#6a6a6a" stroke-width="2" stroke-linecap="round"/></svg><div style="position:absolute;left:85.00px;top:814px;font-size:14px;line-height:18px;font-weight:400;color:#0c44a6;letter-spacing:-0.308px;white-space:nowrap;">@SEO_CARTEL IN TELEGRAM – SEO BACKLINKS, BULK LINK</div><div style="position:absolute;left:85.00px;top:832px;font-size:14px;line-height:18px;font-weight:400;color:#0c44a6;letter-spacing:-0.211px;white-space:nowrap;">POSTING, BOOST SEO RANKING – HTTPS://T.ME/SEO_CARTEL –</div><div style="position:absolute;left:85.00px;top:850px;font-size:14px;line-height:18px;font-weight:400;color:#0c44a6;letter-spacing:0.327px;white-space:nowrap;">Systeck</div><div style="position:absolute;left:85.00px;top:868px;font-size:14px;line-height:18px;font-weight:400;color:#0a8540;white-space:nowrap;"><span style="letter-spacing:0.601px">http://</span><span style="font-weight:700;letter-spacing:0.072px">systeckllc.com</span><span style="letter-spacing:0.679px">/2025/09/02/seo-cartel-in-telegram-seo-ba</span></div><div style="position:absolute;left:86.00px;top:886px;font-size:14px;line-height:18px;font-weight:400;color:#0a8540;letter-spacing:0.36px;white-space:nowrap;">cklinks-bulk-link-10/<svg style="display:inline-block;vertical-align:1px;margin-left:4px" width="8" height="5" viewBox="0 0 8 5"><path d="M0 0 H8 L4 4.6 Z" fill="#0a8540"/></svg></div><div style="position:absolute;left:85.3px;top:908px;width:22.8px;height:14px;background:#ebebeb;border-radius:3px"></div><div style="position:absolute;left:88.80px;top:908px;font-size:10.5px;line-height:14px;font-weight:400;color:#333333;letter-spacing:0.8px;white-space:nowrap;">EN</div><div style="position:absolute;left:112.3px;top:908px;width:77.8px;height:14px;background:#ebebeb;border-radius:3px"></div><div style="position:absolute;left:115.80px;top:908px;font-size:10.5px;line-height:14px;font-weight:400;color:#333333;letter-spacing:0.199px;white-space:nowrap;">ECOMMERCE</div><div style="position:absolute;left:194.3px;top:908px;width:75.4px;height:14px;background:#ebebeb;border-radius:3px"></div><div style="position:absolute;left:198.80px;top:908px;font-size:10.5px;line-height:14px;font-weight:400;color:#333333;letter-spacing:-0.15px;white-space:nowrap;">WORDPRESS</div><div style="position:absolute;left:533.50px;top:814px;font-size:14px;line-height:18px;font-weight:400;color:#333333;letter-spacing:-0.38px;white-space:nowrap;">0.8</div><div style="position:absolute;left:577.30px;top:814px;font-size:14px;line-height:18px;font-weight:400;color:#333333;letter-spacing:-2.28px;white-space:nowrap;">0</div><div style="position:absolute;left:640.70px;top:814px;font-size:14px;line-height:18px;font-weight:400;color:#333333;letter-spacing:-2.28px;white-space:nowrap;">0</div><div style="position:absolute;left:715.00px;top:814px;font-size:14px;line-height:18px;font-weight:400;color:#333333;letter-spacing:-2.28px;white-space:nowrap;">0</div><div style="position:absolute;left:758.60px;top:814px;font-size:14px;line-height:18px;font-weight:400;color:#0c44a6;letter-spacing:-0.09px;white-space:nowrap;">2,921</div><div style="position:absolute;left:810.60px;top:814px;font-size:14px;line-height:18px;font-weight:400;color:#0c44a6;letter-spacing:0.38px;white-space:nowrap;">4,242</div><div style="position:absolute;left:892.60px;top:814px;font-size:14px;line-height:18px;font-weight:400;color:#333333;letter-spacing:-2.28px;white-space:nowrap;">0</div><div style="position:absolute;left:930.80px;top:814px;font-size:14px;line-height:18px;font-weight:400;color:#333333;letter-spacing:-2.28px;white-space:nowrap;">0</div><div style="position:absolute;left:955.30px;top:814px;font-size:14px;line-height:18px;font-weight:400;color:#0c44a6;letter-spacing:-0.298px;white-space:nowrap;">@SEO_CARTEL IN TELEGRAM – SEO BACKLINKS, BULK LINK POSTING, BOOST SEO</div><div style="position:absolute;left:955.30px;top:832px;font-size:14px;line-height:18px;font-weight:400;color:#0c44a6;letter-spacing:-0.247px;white-space:nowrap;">RANKING</div><div style="position:absolute;left:955px;top:852px;width:69.8px;height:14px;background:#ebebeb;border-radius:3px"></div><div style="position:absolute;left:958.80px;top:852px;font-size:10.5px;line-height:14px;font-weight:400;color:#333333;letter-spacing:0.2px;white-space:nowrap;">NOFOLLOW</div><div style="position:absolute;left:955.30px;top:868px;font-size:14px;line-height:18px;font-weight:400;color:#0a8540;white-space:nowrap;"><span style="letter-spacing:0.562px">https://</span><span style="font-weight:700;letter-spacing:0.084px">licensegentlemen.com</span><span style="letter-spacing:0.626px">/blog/top-gaming-licenses-overview-of-the-best-online-gam</span></div><div style="position:absolute;left:955.30px;top:886px;font-size:14px;line-height:18px;font-weight:400;color:#0a8540;letter-spacing:0.537px;white-space:nowrap;">bling-license-options-for-your-casino-business/<svg style="display:inline-block;vertical-align:1px;margin-left:4px" width="8" height="5" viewBox="0 0 8 5"><path d="M0 0 H8 L4 4.6 Z" fill="#0a8540"/></svg></div><div style="position:absolute;left:1570.30px;top:814px;font-size:14px;line-height:18px;font-weight:400;color:#333333;letter-spacing:0.476px;white-space:nowrap;">22 Oct 2025</div><div style="position:absolute;left:1571.30px;top:832px;font-size:14px;line-height:18px;font-weight:400;color:#333333;letter-spacing:0.34px;white-space:nowrap;">4 h ago</div><svg style="position:absolute;left:1706px;top:818.3px;" width="14" height="14" viewBox="0 0 14 14"><circle cx="5.6" cy="5.6" r="3.9" fill="none" stroke="#6a6a6a" stroke-width="1.7"/><path d="M8.4 8.4 L12 12" stroke="#6a6a6a" stroke-width="2" stroke-linecap="round"/></svg><div style="position:absolute;left:197px;top:907px;width:1555px;height:1px;background:#2b2b2b;"></div><div style="position:absolute;left:0px;top:907px;width:197px;height:1px;background:#c8c8c8;"></div><div style="position:absolute;left:738px;top:907px;width:48px;height:1px;background:#8a8a8a;"></div><div style="position:absolute;left:1709px;top:883px;width:40px;height:40px;border-radius:50%;background:#2e3a54"></div><div style="position:absolute;left:1709px;top:886px;width:40px;text-align:center;font-size:22px;line-height:30px;font-weight:700;color:#fff">?</div><div style="position:absolute;left:1734px;top:871px;width:16px;height:16px;border-radius:50%;background:#e01e24"></div><div style="position:absolute;left:1734px;top:871px;width:16px;text-align:center;font-size:11px;line-height:16px;font-weight:700;color:#fff">1</div>
</body></html>
